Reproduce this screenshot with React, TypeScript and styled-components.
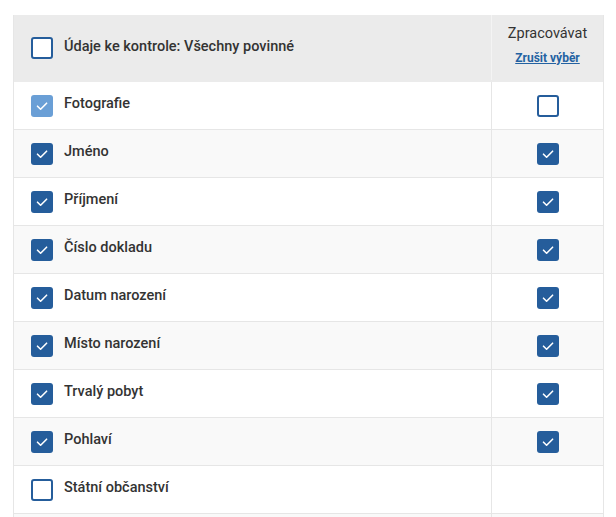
import React from 'react';
import styled, { createGlobalStyle } from 'styled-components';

const GlobalStyle = createGlobalStyle`
  body {
    margin: 0;
    background: #ffffff;
    font-family: Roboto, 'Noto Sans', Arial, sans-serif;
  }
`;

interface RowData {
  label: string;
  checked: boolean;
  disabled?: boolean;
  process?: boolean | null;
}

const rows: RowData[] = [
  { label: 'Fotografie', checked: true, disabled: true, process: false },
  { label: 'Jméno', checked: true, process: true },
  { label: 'Příjmení', checked: true, process: true },
  { label: 'Číslo dokladu', checked: true, process: true },
  { label: 'Datum narození', checked: true, process: true },
  { label: 'Místo narození', checked: true, process: true },
  { label: 'Trvalý pobyt', checked: true, process: true },
  { label: 'Pohlaví', checked: true, process: true },
  { label: 'Státní občanství', checked: false, process: null },
];

const Checkbox: React.FC<{ checked: boolean; disabled?: boolean }> = ({ checked, disabled }) => (
  <Box $checked={checked} $disabled={disabled}>
    {checked && (
      <svg width='22' height='22' viewBox='0 0 22 22'>
        <polyline points='6.5,11.2 9.6,14.2 15.6,8.2' fill='none' stroke='#fff' strokeWidth='1.6' strokeLinecap='round' strokeLinejoin='round' />
      </svg>
    )}
  </Box>
);

const App: React.FC = () => {
  return (
    <Page>
      <GlobalStyle />
      <Table>
        <HeadRow>
          <MainCell>
            <Checkbox checked={false} />
            <HeadTitle>Údaje ke kontrole: Všechny povinné</HeadTitle>
          </MainCell>
          <SideHead>
            <span>Zpracovávat</span>
            <ClearLink href='#'>Zrušit výběr</ClearLink>
          </SideHead>
        </HeadRow>
        {rows.map((r, i) => (
          <Row key={r.label} $striped={i % 2 === 1}>
            <MainCell>
              <Checkbox checked={r.checked} disabled={r.disabled} />
              <Label>{r.label}</Label>
            </MainCell>
            <SideCell>{r.process !== null && r.process !== undefined && <Checkbox checked={r.process} />}</SideCell>
          </Row>
        ))}
        {/* next row, cut off by the bottom edge */}
        <Row $striped>
          <MainCell />
          <SideCell />
        </Row>
      </Table>
    </Page>
  );
};

const Page = styled.div`
  padding: 15px 12px 0 13px;
  height: 517px;
  box-sizing: border-box;
  overflow: hidden;
`;

const Table = styled.div`
  border-left: 1px solid #e6e6e6;
  border-right: 1px solid #e6e6e6;
  display: flex;
  flex-direction: column;
`;

const HeadRow = styled.div`
  display: grid;
  grid-template-columns: 478px 1fr;
  height: 67px;
  padding-bottom: 2px;
  box-sizing: border-box;
  background: #ebebeb;
`;

const Row = styled.div<{ $striped: boolean }>`
  display: grid;
  grid-template-columns: 478px 1fr;
  height: 48px;
  flex-shrink: 0;
  box-sizing: border-box;
  border-bottom: 1px solid #e6e6e6;
  background: ${(p) => (p.$striped ? '#f9f9f9' : '#ffffff')};
`;

const MainCell = styled.div`
  display: flex;
  align-items: center;
  padding-left: 17px;
  gap: 11px;
  border-right: 1px solid #e6e6e6;
`;

const SideHead = styled.div`
  display: flex;
  flex-direction: column;
  align-items: center;
  padding-top: 10px;
  gap: 9px;
  color: #333333;
  font-size: 14.5px;
  border-left: 1px solid #f4f4f4;
  margin-left: -1px;
`;

const SideCell = styled.div`
  display: flex;
  align-items: center;
  justify-content: center;
  padding-left: 1px;
`;

const ClearLink = styled.a`
  color: #2362a2;
  font-size: 12px;
  font-weight: 700;
  text-decoration: underline;
`;

const HeadTitle = styled.span`
  font-size: 14.5px;
  font-weight: 500;
  color: #333333;
  margin-top: -2px;
`;

const Label = styled.span`
  font-size: 14.5px;
  font-weight: 500;
  color: #333333;
  margin-top: -4px;
`;

const Box = styled.span<{ $checked: boolean; $disabled?: boolean }>`
  display: inline-flex;
  width: 22px;
  height: 22px;
  box-sizing: border-box;
  border-radius: 3px;
  flex-shrink: 0;
  border: ${(p) => (p.$checked ? 'none' : `2px solid ${p.$disabled ? '#6a9fd6' : '#255d9b'}`)};
  background: ${(p) => (p.$checked ? (p.$disabled ? '#6a9fd6' : '#255d9b') : '#ffffff')};
`;

export default App;
